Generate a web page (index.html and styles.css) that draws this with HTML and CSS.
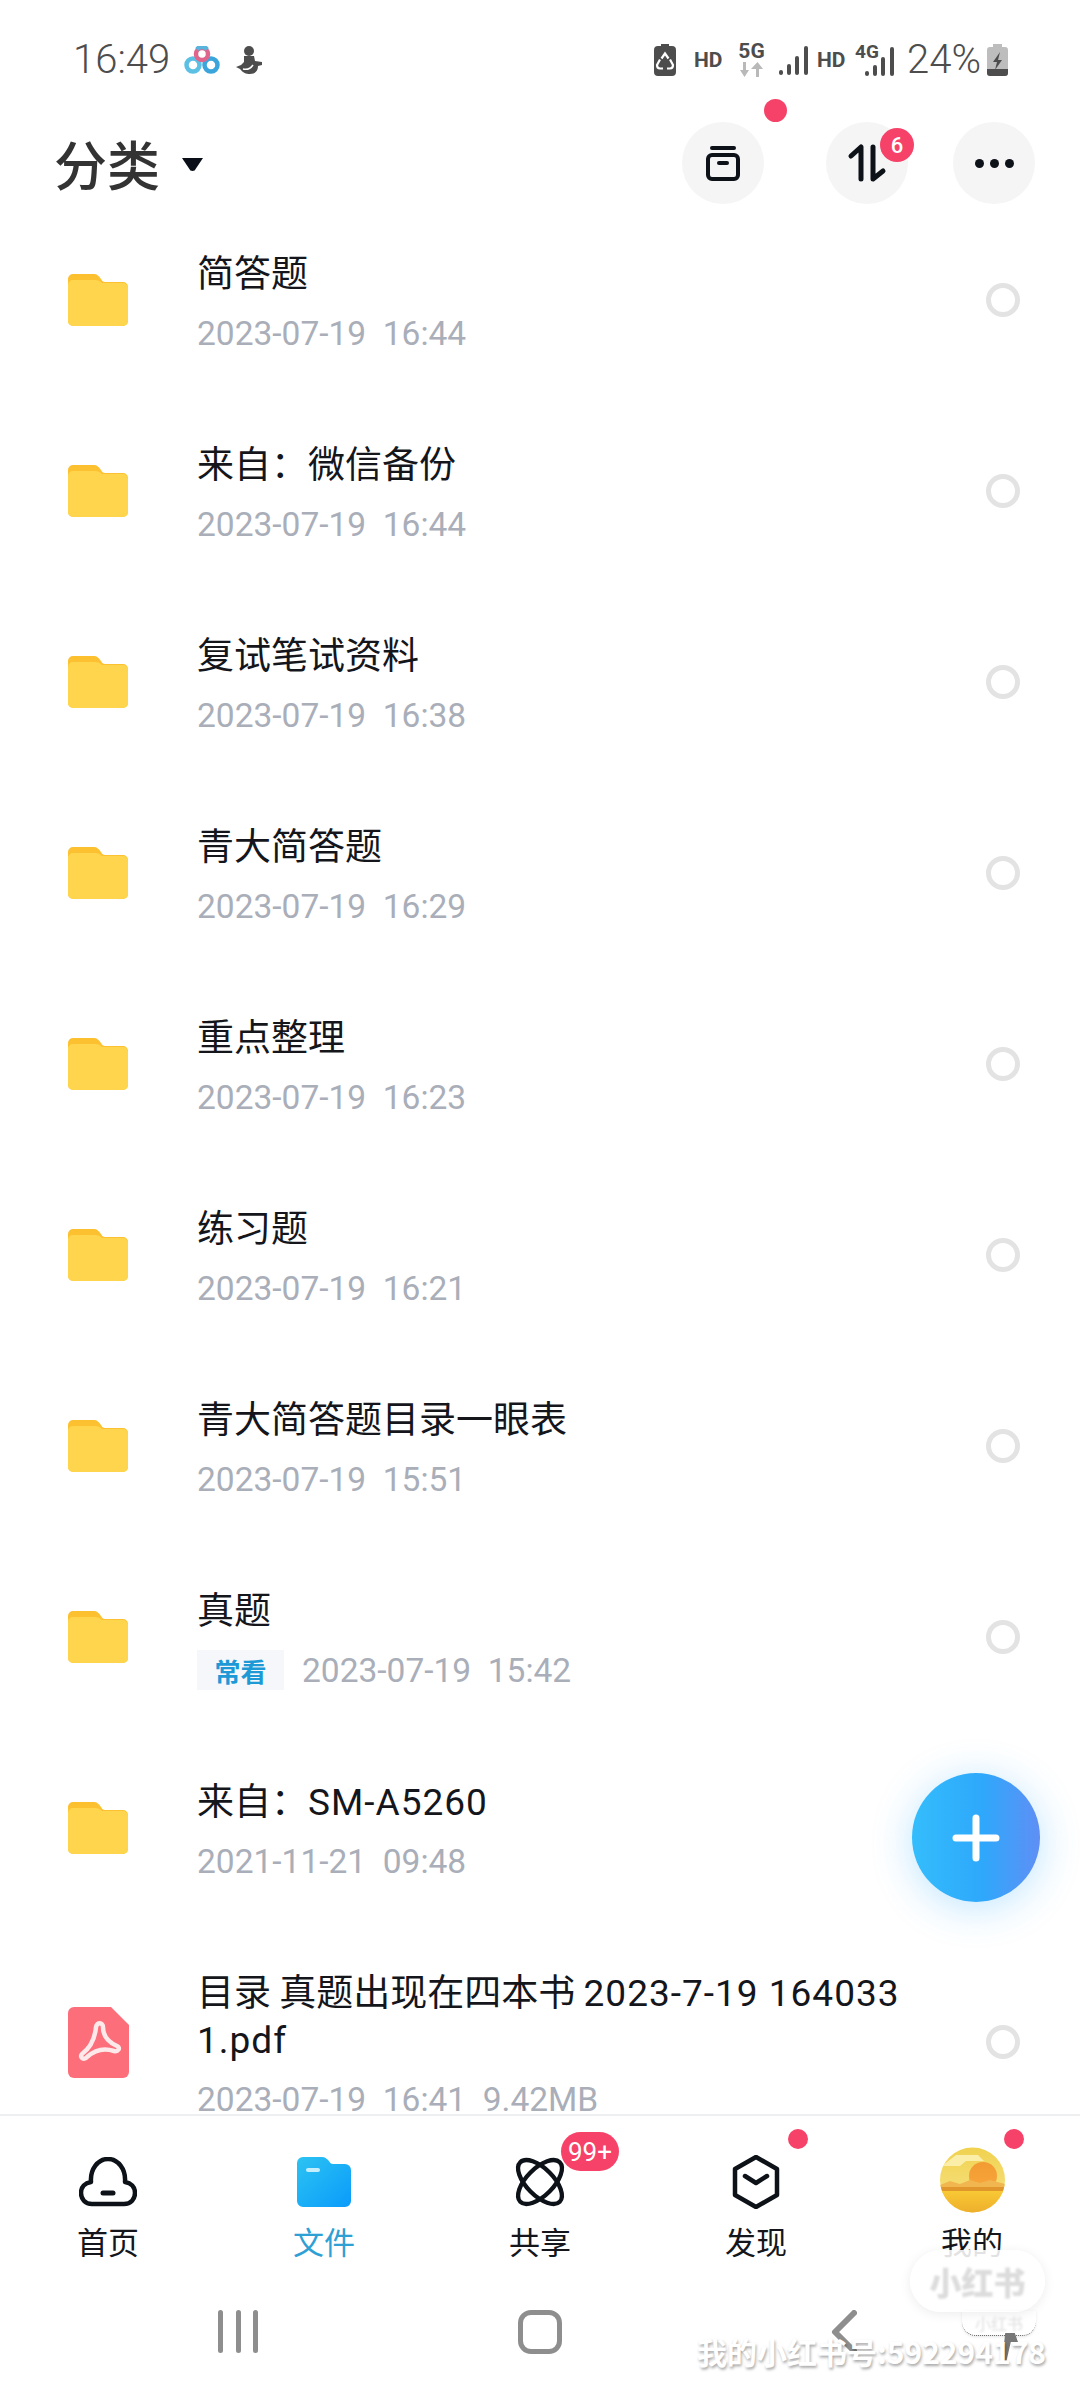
FILE: index.html
```html
<!DOCTYPE html>
<html lang="zh-CN">
<head>
  <meta charset="UTF-8">
  <title>分类</title>
  <link rel="stylesheet" href="styles.css">
</head>
<body>
<div class="app">

  <div class="statusbar">
    <span class="clock">16:49</span>
    <svg class="st-logo" viewBox="0 0 36 28" fill="none" stroke-width="4.5">
      <circle cx="9" cy="19" r="6.5" stroke="#5bc0e4"/>
      <circle cx="27" cy="19" r="6.5" stroke="#3ba5db"/>
      <circle cx="18" cy="8" r="6" stroke="#e0658c"/>
      <path d="M13 3.500a6 6 0 0 1 10 0" stroke="#58b4dc"/>
    </svg>
    <svg class="st-person" viewBox="0 0 26 30" fill="#4d4d4d">
      <circle cx="13" cy="6" r="5"/>
      <path d="M8 11h10l1 5 7 1v3l-4 1c0 5-3 8-8 8-4 0-7-1-10-5l-4-2 5-2 3-3z"/>
      <path d="M7 24c4 1 8-1 10-4" fill="none" stroke="#fff" stroke-width="1.500"/>
    </svg>
    <span class="st-spacer"></span>
    <svg class="st-recycle" viewBox="0 0 22 32">
      <path d="M7 0h8v2h3a4 4 0 0 1 4 4v22a4 4 0 0 1-4 4H4a4 4 0 0 1-4-4V6a4 4 0 0 1 4-4h3z" fill="#4d4d4d"/>
      <path d="M7.500 14.500L11 9.500l3.500 5M16 15.500l3 5.500q0 3.500-3 3.500h-3M6 15.500l-3 5.500q0 3.500 3 3.500h3" fill="none" stroke="#fff" stroke-width="2.200"/>
    </svg>
    <span class="st-hd">HD</span>
    <div class="st-net">
      <span class="st-net-label">5G</span>
      <svg class="st-arrows" viewBox="0 0 25 15" fill="#b9b9b9">
        <path d="M4 0h3v8h3l-4.500 7L1 8h3zM17 15h3V7h4l-5.500-7L12 7h5z"/>
      </svg>
    </div>
    <svg class="st-signal" viewBox="0 0 30 29" fill="#4d4d4d">
      <rect x="0" y="24" width="4" height="5" rx="2"/>
      <rect x="8" y="18" width="4" height="11" rx="2"/>
      <rect x="16" y="10" width="4" height="19" rx="2"/>
      <rect x="25" y="0" width="4" height="29" rx="2"/>
    </svg>
    <span class="st-hd st-hd-2">HD</span>
    <div class="st-net st-net-4g">
      <span class="st-net-label st-small">4G</span>
      <svg class="st-signal st-signal-2" viewBox="0 0 30 29" fill="#4d4d4d">
        <rect x="0" y="24" width="4" height="5" rx="2"/>
        <rect x="8" y="18" width="4" height="11" rx="2"/>
        <rect x="16" y="10" width="4" height="19" rx="2"/>
        <rect x="25" y="0" width="4" height="29" rx="2"/>
      </svg>
    </div>
    <span class="st-battery-text">24%</span>
    <svg class="st-battery" viewBox="0 0 21 32">
      <path d="M6 0h9v3h3a3 3 0 0 1 3 3v23a3 3 0 0 1-3 3H3a3 3 0 0 1-3-3V6a3 3 0 0 1 3-3h3z" fill="#bdbdbd"/>
      <path d="M0 25h21v4a3 3 0 0 1-3 3H3a3 3 0 0 1-3-3z" fill="#4d4d4d"/>
      <path d="M13 8l-7 10h4l-2 8 7-10h-4z" fill="#4d4d4d"/>
    </svg>
  </div>

  <header class="topbar">
    <h1 class="page-title">分类</h1>
    <span class="caret"></span>
    <span class="topbar-spacer"></span>
    <div class="round-btn btn-archive">
      <span class="dot dot-archive"></span>
      <svg class="btn-icon" viewBox="0 0 40 40" fill="none" stroke="#0d1118" stroke-width="4" stroke-linecap="round">
        <path d="M9 5h22"/>
        <rect x="5" y="12" width="30" height="24" rx="4"/>
        <path d="M16 20h8"/>
      </svg>
    </div>
    <div class="round-btn btn-sort">
      <span class="badge badge-six">6</span>
      <svg class="btn-icon" viewBox="0 0 40 40" fill="none" stroke="#0d1118" stroke-width="5" stroke-linecap="round" stroke-linejoin="round">
        <path d="M4 13l10-9v32"/>
        <path d="M26 4v32l10-8"/>
      </svg>
    </div>
    <div class="round-btn btn-more">
      <span class="more-dot"></span>
      <span class="more-dot"></span>
      <span class="more-dot"></span>
    </div>
  </header>

  <main class="file-list">
    <div class="file-row">
      <svg class="file-icon" viewBox="0 0 60 52"><use href="#folder"/></svg>
      <div class="file-text">
        <div class="file-name">简答题</div>
        <div class="file-meta">2023-07-19  16:44</div>
      </div>
      <span class="select-ring"></span>
    </div>
    <div class="file-row">
      <svg class="file-icon" viewBox="0 0 60 52"><use href="#folder"/></svg>
      <div class="file-text">
        <div class="file-name">来自：微信备份</div>
        <div class="file-meta">2023-07-19  16:44</div>
      </div>
      <span class="select-ring"></span>
    </div>
    <div class="file-row">
      <svg class="file-icon" viewBox="0 0 60 52"><use href="#folder"/></svg>
      <div class="file-text">
        <div class="file-name">复试笔试资料</div>
        <div class="file-meta">2023-07-19  16:38</div>
      </div>
      <span class="select-ring"></span>
    </div>
    <div class="file-row">
      <svg class="file-icon" viewBox="0 0 60 52"><use href="#folder"/></svg>
      <div class="file-text">
        <div class="file-name">青大简答题</div>
        <div class="file-meta">2023-07-19  16:29</div>
      </div>
      <span class="select-ring"></span>
    </div>
    <div class="file-row">
      <svg class="file-icon" viewBox="0 0 60 52"><use href="#folder"/></svg>
      <div class="file-text">
        <div class="file-name">重点整理</div>
        <div class="file-meta">2023-07-19  16:23</div>
      </div>
      <span class="select-ring"></span>
    </div>
    <div class="file-row">
      <svg class="file-icon" viewBox="0 0 60 52"><use href="#folder"/></svg>
      <div class="file-text">
        <div class="file-name">练习题</div>
        <div class="file-meta">2023-07-19  16:21</div>
      </div>
      <span class="select-ring"></span>
    </div>
    <div class="file-row">
      <svg class="file-icon" viewBox="0 0 60 52"><use href="#folder"/></svg>
      <div class="file-text">
        <div class="file-name">青大简答题目录一眼表</div>
        <div class="file-meta">2023-07-19  15:51</div>
      </div>
      <span class="select-ring"></span>
    </div>
    <div class="file-row">
      <svg class="file-icon" viewBox="0 0 60 52"><use href="#folder"/></svg>
      <div class="file-text">
        <div class="file-name">真题</div>
        <div class="file-meta"><span class="tag">常看</span>2023-07-19  15:42</div>
      </div>
      <span class="select-ring"></span>
    </div>
    <div class="file-row">
      <svg class="file-icon" viewBox="0 0 60 52"><use href="#folder"/></svg>
      <div class="file-text">
        <div class="file-name">来自：<span class="latin">SM-A5260</span></div>
        <div class="file-meta">2021-11-21  09:48</div>
      </div>
      <span class="select-ring"></span>
    </div>
    <div class="file-row file-row-tall">
      <svg class="file-icon file-icon-pdf" viewBox="0 0 61 71">
        <path d="M6 0h37l18 18v47a6 6 0 0 1-6 6H6a6 6 0 0 1-6-6V6a6 6 0 0 1 6-6z" fill="#fb6e7a"/>
        <path d="M28 20c1-5 7-5 7 0 0 8 5 15 14 19 4 2 1 6-3 5-9-3-18-2-27 6-3 4-8 0-5-3 8-6 13-16 14-27z" fill="none" stroke="#fde8ea" stroke-width="4.500" stroke-linejoin="round"/>
      </svg>
      <div class="file-text">
        <div class="file-name">目录 真题出现在四本书 <span class="latin">2023-7-19 164033 1.pdf</span></div>
        <div class="file-meta">2023-07-19  16:41  9.42MB</div>
      </div>
      <span class="select-ring"></span>
    </div>
  </main>

  <div class="fab">
    <svg class="fab-plus" viewBox="0 0 48 48" stroke="#fff" stroke-width="7" stroke-linecap="round">
      <path d="M24 4v40M4 24h40"/>
    </svg>
  </div>

  <nav class="tabbar">
    <div class="tab">
      <div class="tab-icon">
        <svg class="ic-cloud" viewBox="0 0 58 50" fill="none" stroke="#0d1118" stroke-width="4.500" stroke-linejoin="round" stroke-linecap="round">
          <path d="M13 47C6 47 2 42 2 36c0-6 4-10 10-11C11 12 19 2 29 2s18 10 17 23c6 1 10 5 10 11 0 6-4 11-11 11z"/>
          <path d="M24 36h10" stroke-width="5"/>
        </svg>
      </div>
      <span class="tab-label">首页</span>
    </div>
    <div class="tab tab-active">
      <div class="tab-icon">
        <svg class="ic-files" viewBox="0 0 54 50">
          <defs>
            <linearGradient id="tabFolder" x1="0" y1="0" x2="1" y2="1">
              <stop offset="0" stop-color="#2cc3f2"/>
              <stop offset="1" stop-color="#0a9bfb"/>
            </linearGradient>
          </defs>
          <path d="M6 0h19c3 0 5 2 7 4 1 2 2 3 4 3h12a6 6 0 0 1 6 6v31a6 6 0 0 1-6 6H6a6 6 0 0 1-6-6V6a6 6 0 0 1 6-6z" fill="url(#tabFolder)"/>
          <rect x="9" y="11" width="14" height="4" rx="2" fill="#c4eefc"/>
        </svg>
      </div>
      <span class="tab-label">文件</span>
    </div>
    <div class="tab">
      <div class="tab-icon">
        <svg class="ic-share" viewBox="0 0 52 52" fill="none" stroke="#0d1118" stroke-width="4.500">
          <ellipse cx="26" cy="26" rx="29" ry="14" transform="rotate(45 26 26)"/>
          <ellipse cx="26" cy="26" rx="29" ry="14" transform="rotate(-45 26 26)"/>
        </svg>
        <span class="badge badge-count">99+</span>
      </div>
      <span class="tab-label">共享</span>
    </div>
    <div class="tab">
      <div class="tab-icon">
        <svg class="ic-hex" viewBox="0 0 48 54" fill="none" stroke="#0d1118" stroke-width="4.500" stroke-linejoin="round" stroke-linecap="round">
          <path d="M24 2l21 12v26L24 52 3 40V14z"/>
          <path d="M13 21l11 7 11-7"/>
        </svg>
        <span class="dot dot-tab"></span>
      </div>
      <span class="tab-label">发现</span>
    </div>
    <div class="tab">
      <div class="tab-icon">
        <svg class="ic-avatar" viewBox="0 0 65 66">
          <defs>
            <clipPath id="avatarClip"><circle cx="32.500" cy="33" r="32.500"/></clipPath>
            <linearGradient id="sky" x1="0" y1="0" x2="0" y2="1">
              <stop offset="0" stop-color="#f0d24f"/>
              <stop offset="1" stop-color="#f8e38a"/>
            </linearGradient>
            <linearGradient id="sea" x1="0" y1="0" x2="0" y2="1">
              <stop offset="0" stop-color="#f9c935"/>
              <stop offset="1" stop-color="#edae2b"/>
            </linearGradient>
            <linearGradient id="sun" x1="0" y1="0" x2="0" y2="1">
              <stop offset="0" stop-color="#f29b33"/>
              <stop offset="1" stop-color="#f8a63c"/>
            </linearGradient>
          </defs>
          <g clip-path="url(#avatarClip)">
            <rect width="65" height="66" fill="url(#sky)"/>
            <path d="M16 8h22l6 6H26l-6 5H2z" fill="#fbeea8"/>
            <circle cx="43" cy="29" r="14" fill="url(#sun)"/>
            <path d="M0 38l10-4 10 3 10-4 10 3 10-3 15 4v8H0z" fill="#f1b64f"/>
            <rect y="40" width="65" height="4" fill="#e0962c"/>
            <rect y="44" width="65" height="22" fill="url(#sea)"/>
          </g>
        </svg>
        <span class="dot dot-tab"></span>
      </div>
      <span class="tab-label">我的</span>
    </div>
  </nav>

  <div class="navbar">
    <div class="nav-recents"><span></span><span></span><span></span></div>
    <div class="nav-home"></div>
    <svg class="nav-back" viewBox="0 0 26 44" fill="none" stroke="#8e8e8e" stroke-width="6" stroke-linecap="round" stroke-linejoin="round">
      <path d="M23 3L4 22l19 19"/>
    </svg>
  </div>

  <!-- watermark sits on top of the screenshot -->
  <div class="wm-badge"><span class="wm-blur">小红书</span></div>
  <div class="wm-small"><span class="wm-blur">小红书</span></div>
  <span class="wm-mark"></span>
  <div class="wm-id">我的小红书号:592294178</div>

  <svg class="defs-only">
    <defs>
      <linearGradient id="folderBack" x1="0" y1="0" x2="0" y2="1">
        <stop offset="0" stop-color="#fcc02f"/>
        <stop offset="1" stop-color="#fdc83c"/>
      </linearGradient>
      <g id="folder">
        <path d="M5 0h21c3 0 5 2 7 5 1 2 2 3 4 3h18a5 5 0 0 1 5 5v34a5 5 0 0 1-5 5H5a5 5 0 0 1-5-5V5a5 5 0 0 1 5-5z" fill="url(#folderBack)"/>
        <path d="M5 6h22c3 0 5 1 7 3h21a5 5 0 0 1 5 5v33a5 5 0 0 1-5 5H5a5 5 0 0 1-5-5V11a5 5 0 0 1 5-5z" fill="#fed54d"/>
      </g>
    </defs>
  </svg>
</div>
</body>
</html>
```

FILE: styles.css
```css
* {
  box-sizing: border-box;
}

body {
  margin: 0;
  background: #fff;
  font-family: "Noto Sans CJK SC", Roboto, sans-serif;
}

.app {
  position: relative;
  display: flex;
  flex-direction: column;
  width: 1080px;
  height: 2400px;
  overflow: hidden;
  background: #fff;
}

.defs-only {
  position: absolute;
  width: 0;
  height: 0;
}

/* status bar */
.statusbar {
  display: flex;
  align-items: center;
  flex: none;
  height: 92px;
  padding: 28px 72px 0 73px;
  color: #4d4d4d;
  font-family: Roboto, sans-serif;
}

.clock {
  width: 96px;
  font-size: 40px;
  font-weight: 300;
  line-height: 44px;
}

.st-logo {
  width: 36px;
  height: 28px;
  margin-left: 15px;
}

.st-person {
  width: 26px;
  height: 30px;
  margin-left: 16px;
}

.st-spacer {
  flex: 1;
}

.st-recycle {
  width: 22px;
  height: 32px;
}

.st-hd {
  width: 27px;
  margin-left: 18px;
  font-size: 21px;
  font-weight: 700;
}

.st-hd-2 {
  margin-left: 8px;
}

.st-net {
  position: relative;
  display: flex;
  flex-direction: column;
  align-items: center;
  width: 25px;
  margin-left: 18px;
}

.st-net-label {
  font-size: 21px;
  font-weight: 700;
  line-height: 17px;
}

.st-arrows {
  width: 25px;
  height: 15px;
  margin-top: 2px;
}

.st-signal {
  width: 30px;
  height: 29px;
  margin-left: 15px;
}

.st-net-4g {
  width: 40px;
  height: 32px;
  margin-left: 11px;
  align-items: flex-start;
}

.st-small {
  font-size: 19px;
  line-height: 15px;
}

.st-signal-2 {
  position: absolute;
  top: 3px;
  left: 10px;
  margin: 0;
}

.st-battery-text {
  margin-left: 12px;
  font-size: 40px;
  font-weight: 300;
  line-height: 44px;
}

.st-battery {
  width: 21px;
  height: 32px;
  margin-left: 6px;
}

/* top bar */
.topbar {
  display: flex;
  flex: none;
  align-items: flex-start;
  height: 112px;
  padding: 30px 45px 0 54px;
}

.page-title {
  margin: 0;
  color: #333;
  font-size: 53px;
  font-weight: 500;
  line-height: 82px;
}

.caret {
  width: 21px;
  height: 14px;
  margin: 35px 0 0 22px;
  background: #0a0e18;
  clip-path: polygon(0 8%, 100% 8%, 60% 96%, 50% 100%, 40% 96%);
}

.topbar-spacer {
  flex: 1;
}

.round-btn {
  position: relative;
  display: flex;
  align-items: center;
  justify-content: center;
  width: 82px;
  height: 82px;
  border-radius: 50%;
  background: #f5f5f6;
}

.btn-sort {
  margin-left: 62px;
}

.btn-more {
  gap: 6px;
  margin-left: 45px;
}

.btn-icon {
  width: 40px;
  height: 40px;
}

.more-dot {
  width: 9px;
  height: 9px;
  border-radius: 50%;
  background: #0d1118;
}

.dot {
  position: absolute;
  border-radius: 50%;
  background: #f64268;
}

.dot-archive {
  top: -23px;
  right: -23px;
  width: 23px;
  height: 23px;
}

.badge {
  position: absolute;
  display: flex;
  align-items: center;
  justify-content: center;
  background: #f64268;
  color: #fff;
  font-family: Roboto, sans-serif;
}

.badge-six {
  top: 6px;
  left: 54px;
  width: 34px;
  height: 34px;
  border-radius: 50%;
  font-size: 22px;
  font-weight: 500;
}

/* file list */
.file-list {
  flex: 1;
  min-height: 0;
  overflow: hidden;
}

.file-row {
  display: flex;
  align-items: center;
  height: 191px;
  padding: 0 60px 0 68px;
}

.file-row-tall {
  height: 238px;
}

.file-icon {
  flex: none;
  width: 60px;
  height: 52px;
}

.file-icon-pdf {
  width: 61px;
  height: 71px;
}

.file-text {
  flex: 1;
  min-width: 0;
  margin-left: 69px;
  padding-top: 2px;
}

.file-icon-pdf + .file-text {
  margin-left: 68px;
}

.file-name {
  max-width: 760px;
  color: #14161b;
  font-size: 37px;
  line-height: 47px;
}

.latin {
  font-family: Roboto, sans-serif;
  letter-spacing: 1px;
  line-height: 1;
}

.file-meta {
  display: flex;
  align-items: center;
  height: 40px;
  margin-top: 18px;
  color: #a9aeb9;
  font-family: Roboto, sans-serif;
  font-size: 33.5px;
  white-space: pre;
}

.tag {
  display: flex;
  align-items: center;
  justify-content: center;
  width: 87px;
  height: 40px;
  margin-right: 18px;
  background: #f5f7fa;
  color: #1d9ad6;
  font-family: "Noto Sans CJK SC", sans-serif;
  font-size: 26px;
  font-weight: 700;
}

.select-ring {
  flex: none;
  width: 34px;
  height: 34px;
  border: 5px solid #e3e3e3;
  border-radius: 50%;
}

/* floating add button */
.fab {
  position: absolute;
  top: 1773px;
  left: 912px;
  display: flex;
  align-items: center;
  justify-content: center;
  width: 128px;
  height: 129px;
  border-radius: 50%;
  background: linear-gradient(90deg, #34bdfc 0%, #2ea8fb 55%, #5f8ff5 100%);
  box-shadow: 0 6px 40px rgba(40, 170, 255, 0.3);
}

.fab-plus {
  width: 48px;
  height: 48px;
}

/* bottom tabs */
.tabbar {
  display: grid;
  flex: none;
  grid-template-columns: repeat(5, 1fr);
  height: 176px;
  padding-top: 35px;
  border-top: 2px solid #eeeff1;
  background: #fff;
}

.tab {
  display: flex;
  flex-direction: column;
  align-items: center;
}

.tab-icon {
  position: relative;
  display: flex;
  align-items: center;
  justify-content: center;
  width: 100%;
  height: 62px;
}

.tab-label {
  margin-top: 11px;
  color: #14161b;
  font-size: 31px;
  line-height: 34px;
}

.tab-active .tab-label {
  color: #2fa0d4;
}

.ic-cloud {
  width: 58px;
  height: 50px;
}

.ic-files {
  width: 54px;
  height: 50px;
}

.ic-share {
  width: 50px;
  height: 50px;
  overflow: visible;
}

.ic-hex {
  width: 48px;
  height: 54px;
}

.ic-avatar {
  width: 65px;
  height: 66px;
  flex: none;
  margin-top: -4px;
}

.badge-count {
  top: -19px;
  left: 129px;
  width: 58px;
  height: 39px;
  border-radius: 20px;
  font-size: 26px;
}

.dot-tab {
  top: -22px;
  right: 56px;
  width: 20px;
  height: 20px;
}

/* system nav */
.navbar {
  display: flex;
  flex: none;
  align-items: flex-start;
  height: 110px;
  padding: 20px 0 0 218px;
  background: #fff;
}

.nav-recents {
  display: flex;
  justify-content: space-between;
  width: 40px;
  height: 43px;
}

.nav-recents span {
  width: 5px;
  height: 43px;
  border-radius: 3px;
  background: #8e8e8e;
}

.nav-home {
  width: 44px;
  height: 44px;
  margin-left: 260px;
  border: 5px solid #8e8e8e;
  border-radius: 13px;
}

.nav-back {
  width: 26px;
  height: 44px;
  margin-left: 269px;
}

/* watermark */
.wm-blur {
  filter: blur(1px);
}

.wm-badge {
  position: absolute;
  top: 2250px;
  left: 910px;
  width: 135px;
  height: 62px;
  border-radius: 31px;
  background: rgba(255, 255, 255, 0.88);
  box-shadow: 0 2px 12px rgba(0, 0, 0, 0.08);
  color: #dcdcdc;
  font-size: 32px;
  font-weight: 900;
  line-height: 62px;
  text-align: center;
}

.wm-small {
  position: absolute;
  top: 2311px;
  left: 962px;
  width: 74px;
  height: 25px;
  border-bottom: 1px dotted #555;
  border-radius: 0 0 14px 14px;
  box-shadow: 0 1px 3px rgba(0, 0, 0, 0.1);
  color: #e0e0e0;
  font-size: 16px;
  line-height: 25px;
  text-align: center;
}

.wm-mark {
  position: absolute;
  top: 2333px;
  left: 1002px;
  width: 16px;
  height: 30px;
  background: #777;
  clip-path: polygon(20% 0, 80% 0, 100% 30%, 55% 30%, 25% 100%, 0 100%);
}

.wm-id {
  position: absolute;
  top: 2333px;
  left: 697px;
  color: #fff;
  font-size: 30px;
  font-weight: 700;
  line-height: 36px;
  white-space: nowrap;
  text-shadow: 1px 2px 3px rgba(0, 0, 0, 0.35);
}
```
